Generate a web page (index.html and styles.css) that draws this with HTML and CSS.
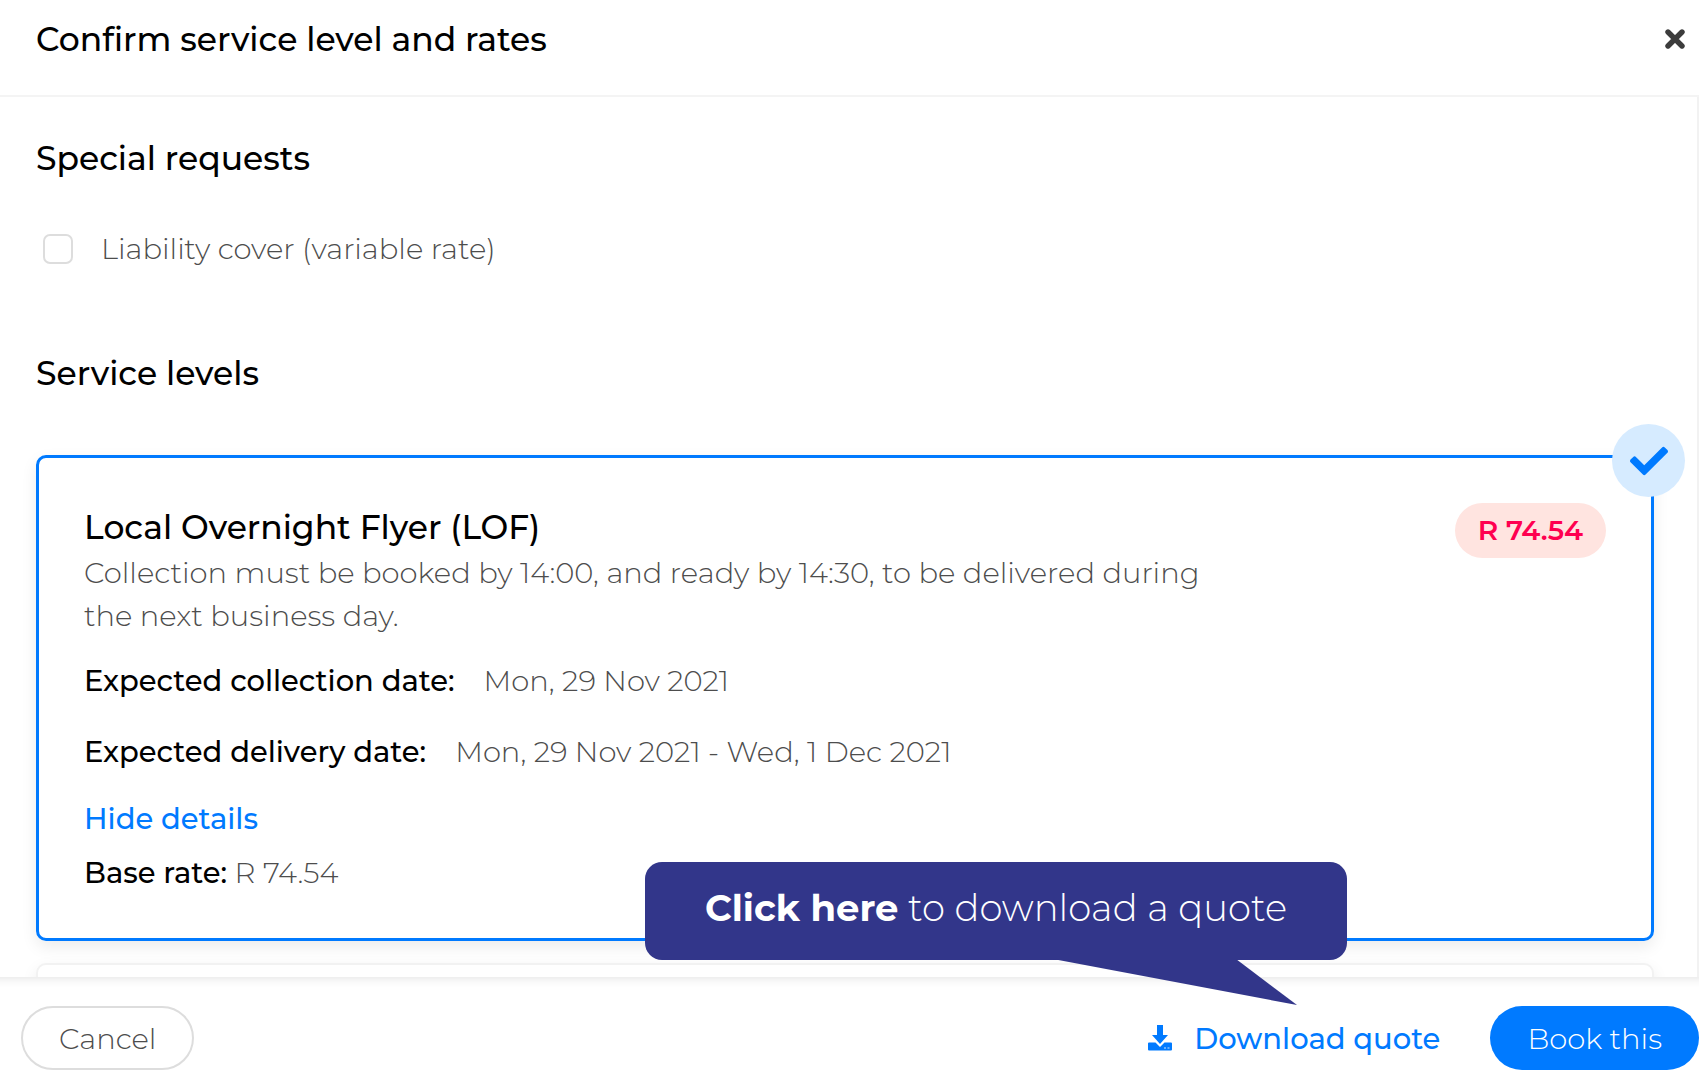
FILE: index.html
```html
<!DOCTYPE html>
<html lang="en">
<head>
  <meta charset="utf-8">
  <title>Confirm service level and rates</title>
  <link rel="stylesheet" href="styles.css">
</head>
<body>
  <div class="modal">
    <header class="modal-header">
      <h1>Confirm service level and rates</h1>
      <button type="button" class="close" aria-label="Close">
        <svg viewBox="0 0 20 20" width="20" height="20">
          <path d="M3 3L17 17M17 3L3 17" stroke="#3c3c3c" stroke-width="5.4" stroke-linecap="round"/>
        </svg>
      </button>
    </header>

    <main class="modal-body">
      <h2>Special requests</h2>
      <div class="request">
        <input type="checkbox" id="liability">
        <label for="liability">Liability cover (variable rate)</label>
      </div>

      <h2>Service levels</h2>
      <section class="card selected">
        <span class="tick">
          <svg viewBox="0 0 512 512" width="38" height="38">
            <path d="M173.900 439.400l-166.400-166.400c-10-10-10-26.200 0-36.200l36.200-36.200c10-10 26.200-10 36.200 0L192 312.700 432.100 72.600c10-10 26.200-10 36.200 0l36.200 36.200c10 10 10 26.200 0 36.200l-294.400 294.400c-10 10-26.200 10-36.200 0z" fill="#007aff"/>
          </svg>
        </span>
        <div class="card-top">
          <div class="card-text">
            <h3>Local Overnight Flyer (LOF)</h3>
            <p>Collection must be booked by 14:00, and ready by 14:30, to be delivered during the next business day.</p>
          </div>
          <span class="price">R 74.54</span>
        </div>
        <div class="date"><strong>Expected collection date:</strong><span>Mon, 29 Nov 2021</span></div>
        <div class="date"><strong>Expected delivery date:</strong><span>Mon, 29 Nov 2021 - Wed, 1 Dec 2021</span></div>
        <a href="#" class="toggle">Hide details</a>
        <div class="rate"><strong>Base rate:</strong> R 74.54</div>
      </section>
      <section class="card next"></section>
    </main>

    <footer class="modal-footer">
      <button type="button" class="btn cancel">Cancel</button>
      <div class="actions">
        <button type="button" class="download">
          <svg viewBox="0 0 24 26" width="24" height="26">
            <path d="M9 0h6v10h5L12 19L4 10h5z" fill="#007aff"/>
            <path d="M1 17.500h6.500l4.500 4.500l4.500-4.500H23a1 1 0 0 1 1 1v6a1 1 0 0 1-1 1H1a1 1 0 0 1-1-1v-6a1 1 0 0 1 1-1z" fill="#007aff"/>
            <path d="M16 23h2M19.500 23h2" stroke="#cce4ff" stroke-width="1.200"/>
          </svg>
          Download quote
        </button>
        <button type="button" class="btn book">Book this</button>
      </div>
      <div class="callout">
        <strong>Click here</strong> to download a quote
        <svg class="tail" viewBox="0 0 244 46" width="244" height="46">
          <path d="M0 0H183L244 46z" fill="#32368a"/>
        </svg>
      </div>
    </footer>
  </div>
</body>
</html>
```
FILE: styles.css
```css
* {
  box-sizing: border-box;
}
body {
  margin: 0;
  font-family: Montserrat, Inter, sans-serif;
  font-size: 29px;
  font-weight: 300;
  line-height: 43px;
  color: #4d4d4d;
  background: #fff;
}
h1, h2, h3 {
  margin: 0;
  font-size: 33px;
  font-weight: 500;
  line-height: 44px;
  color: #000;
}
h3 {
  margin: 2px 0;
}
p {
  margin: 0;
}
strong {
  font-weight: 500;
  color: #000;
}
button {
  font: inherit;
  cursor: pointer;
}
.modal {
  display: flex;
  flex-direction: column;
  height: 100vh;
  overflow: hidden;
}
.modal-header {
  display: flex;
  justify-content: space-between;
  align-items: center;
  padding: 17px 14px 34px 36px;
  border-bottom: 2px solid #f4f4f4;
}
.close {
  display: flex;
  padding: 0;
  border: none;
  background: none;
}
.modal-body {
  flex: 1;
  min-height: 0;
  overflow: hidden;
  padding: 39px 43px 0 36px;
  border-right: 2px solid #f2f2f2;
}
.request {
  display: flex;
  align-items: center;
  gap: 28px;
  padding: 47px 7px 81px;
}
.request input {
  appearance: none;
  width: 30px;
  height: 30px;
  margin: 0;
  border: 2px solid #ddd;
  border-radius: 7px;
}
.card {
  position: relative;
  margin-top: 60px;
  padding: 45px 45px 44px;
  border: 3px solid #007aff;
  border-radius: 10px;
  box-shadow: 0 6px 16px rgba(0, 0, 0, 0.08);
}
.card.next {
  margin-top: 22px;
  border: 2px solid #f2f2f2;
  background: #fff;
}
.tick {
  position: absolute;
  top: -34px;
  right: -34px;
  display: flex;
  align-items: center;
  justify-content: center;
  width: 73px;
  height: 73px;
  border-radius: 50%;
  background: #d6ebff;
}
.card-top {
  display: flex;
  justify-content: space-between;
  align-items: flex-start;
}
.card-text {
  max-width: 1140px;
}
.price {
  padding: 6px 23px;
  border-radius: 28px;
  font-size: 28px;
  font-weight: 600;
  color: #ff0050;
  background: #ffe4e0;
}
.date {
  display: flex;
  gap: 29px;
  margin: 22px 0 28px;
}
.toggle {
  display: block;
  margin-top: -4px;
  font-weight: 500;
  color: #007aff;
  text-decoration: none;
}
.rate {
  margin-top: 11px;
}
.modal-footer {
  position: relative;
  display: flex;
  justify-content: space-between;
  align-items: center;
  padding: 29px 0 21px 21px;
  box-shadow: inset 0 12px 10px -10px rgba(0, 0, 0, 0.1);
}
.btn {
  height: 64px;
  padding: 0 37px;
  border-radius: 32px;
}
.cancel {
  padding: 0 36px;
  border: 2px solid #ddd;
  color: #4d4d4d;
  background: #fff;
}
.book {
  border: none;
  color: #fff;
  background: #007aff;
}
.actions {
  display: flex;
  align-items: center;
  gap: 50px;
}
.download {
  display: flex;
  align-items: center;
  gap: 22px;
  padding: 0;
  border: none;
  font-weight: 500;
  color: #007aff;
  background: none;
}
.callout {
  position: absolute;
  right: 352px;
  bottom: 131px;
  padding: 24px 60px 30px;
  border-radius: 17px;
  font-size: 37px;
  line-height: 44px;
  color: #fff;
  background: #32368a;
}
.callout strong {
  font-weight: 700;
  color: #fff;
}
.tail {
  position: absolute;
  top: 100%;
  right: 50px;
  margin-top: -1px;
}
```
